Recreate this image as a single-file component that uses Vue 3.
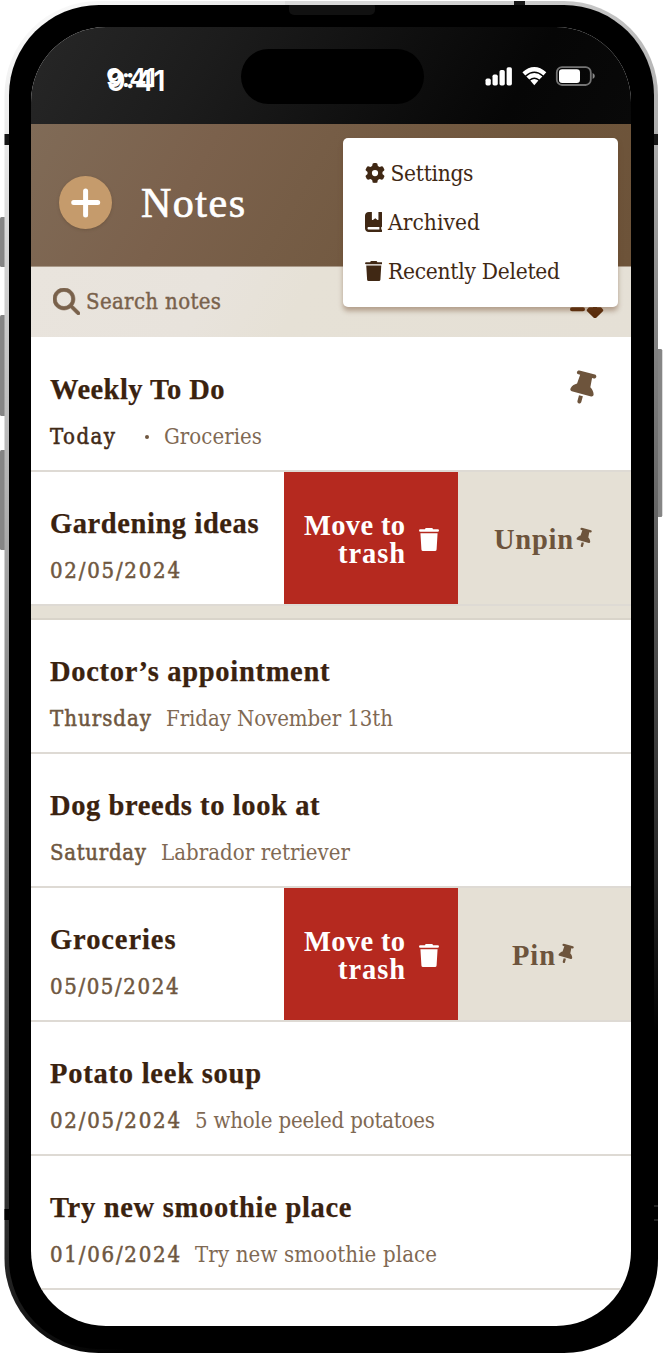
<script setup>
// Tracks a label out (or in) so that it spans the given number of pixels.
const vFit = {
  mounted(el, { value }) {
    if (!value) return
    const natural = el.getBoundingClientRect().width
    const step = (value - natural) / (el.textContent.length - 1)
    el.style.letterSpacing = `${step}px`
    el.style.marginRight = `${-step}px`
  },
}

const icons = {
  search: { box: '0 0 512 512', d: 'M416 208c0 45.9-14.9 88.3-40 122.7L502.6 457.4c12.5 12.5 12.5 32.8 0 45.3s-32.8 12.5-45.3 0L330.7 376c-34.4 25.2-76.8 40-122.7 40C93.1 416 0 322.9 0 208S93.1 0 208 0S416 93.1 416 208zM208 352a144 144 0 1 0 0-288 144 144 0 1 0 0 288z' },
  gear: { box: '0 0 512 512', d: 'M495.9 166.6c3.2 8.7 .5 18.4-6.4 24.6l-43.3 39.4c1.1 8.3 1.7 16.8 1.7 25.4s-.6 17.1-1.7 25.4l43.3 39.4c6.9 6.2 9.6 15.9 6.4 24.6c-4.4 11.9-9.7 23.3-15.8 34.3l-4.7 8.1c-6.6 11-14 21.4-22.1 31.2c-5.9 7.2-15.7 9.6-24.5 6.8l-55.7-17.7c-13.4 10.3-28.2 18.9-44 25.4l-12.5 57.1c-2 9.1-9 16.3-18.2 17.8c-13.8 2.3-28 3.5-42.5 3.5s-28.7-1.2-42.5-3.5c-9.2-1.5-16.2-8.7-18.2-17.8l-12.5-57.1c-15.8-6.5-30.6-15.1-44-25.4L83.1 425.9c-8.8 2.8-18.6 .3-24.5-6.8c-8.1-9.8-15.5-20.2-22.1-31.2l-4.7-8.1c-6.1-11-11.4-22.4-15.8-34.3c-3.2-8.7-.5-18.4 6.4-24.6l43.3-39.4C64.6 273.1 64 264.6 64 256s.6-17.1 1.7-25.4L22.4 191.2c-6.9-6.2-9.6-15.9-6.4-24.6c4.4-11.9 9.7-23.3 15.8-34.3l4.7-8.1c6.6-11 14-21.4 22.1-31.2c5.9-7.2 15.7-9.6 24.5-6.8l55.7 17.7c13.4-10.3 28.2-18.9 44-25.4l12.5-57.1c2-9.1 9-16.3 18.2-17.8C227.3 1.2 241.5 0 256 0s28.7 1.2 42.5 3.5c9.2 1.5 16.2 8.7 18.2 17.8l12.5 57.1c15.8 6.5 30.6 15.1 44 25.4l55.7-17.7c8.8-2.8 18.6-.3 24.5 6.8c8.1 9.8 15.5 20.2 22.1 31.2l4.7 8.1c6.1 11 11.4 22.4 15.8 34.3zM256 336a80 80 0 1 0 0-160 80 80 0 1 0 0 160z' },
  book: { box: '0 0 448 512', d: 'M0 96C0 43 43 0 96 0h80v190.7c0 13.4 15.5 20.9 26 12.5L264 160l54 43.2c10.5 8.4 26 .9 26-12.5V0h40 32c17.7 0 32 14.3 32 32v320c0 17.7-14.3 32-32 32v64c17.7 0 32 14.3 32 32s-14.3 32-32 32H96c-53 0-96-43-96-96V96zM64 416c0 17.7 14.3 32 32 32h272v-64H96c-17.7 0-32 14.3-32 32z' },
  trash: { box: '0 0 448 512', d: 'M28 30H132L144 8Q149 0 160 0H288Q299 0 304 8L316 30H420Q448 32 448 58Q446 84 420 86H28Q2 84 0 58Q2 32 28 30ZM32 116H416L394 478Q391 512 358 512H90Q57 512 54 478Z' },
  pin: { box: '0 0 384 512', d: 'M32 32C32 14.3 46.3 0 64 0H320c17.7 0 32 14.3 32 32s-14.3 32-32 32H290.5l11.4 148.2c36.7 19.9 65.7 53.2 79.5 94.7l1 3c3.3 9.8 1.6 20.5-4.4 28.8s-15.7 13.3-26 13.3H32c-10.3 0-19.9-4.9-26-13.3s-7.7-19.1-4.4-28.8l1-3c13.8-41.5 42.8-74.8 79.5-94.7L93.5 64H64C46.3 64 32 49.7 32 32zM160 384h64v96c0 17.7-14.3 32-32 32s-32-14.3-32-32V384z' },
}

const menu = [
  { icon: 'gear', label: 'Settings', width: 83 },
  { icon: 'book', label: 'Archived', width: 92 },
  { icon: 'trash', label: 'Recently Deleted', width: 172 },
]

const notes = [
  { title: 'Weekly To Do', tw: 174.5, date: 'Today', dw: 65, text: 'Groceries', sw: 98, pinned: true, dot: true },
  { title: 'Gardening ideas', tw: 208.5, date: '02/05/2024', dw: 130, action: 'Unpin', aw: 79, last: true },
  { title: 'Doctor’s appointment', tw: 279.5, date: 'Thursday', dw: 101, text: 'Friday November 13th', sw: 227 },
  { title: 'Dog breeds to look at', tw: 269.5, date: 'Saturday', dw: 96, text: 'Labrador retriever', sw: 189 },
  { title: 'Groceries', tw: 125.5, date: '05/05/2024', dw: 128.5, action: 'Pin', aw: 43 },
  { title: 'Potato leek soup', tw: 211, date: '02/05/2024', dw: 130, text: '5 whole peeled potatoes', sw: 240 },
  { title: 'Try new smoothie place', tw: 301.5, date: '01/06/2024', dw: 130, text: 'Try new smoothie place', sw: 242 },
]
</script>

<template>
  <div class="stage">
    <svg class="frame" width="663" height="1353" viewBox="0 0 663 1353">
      <defs>
        <linearGradient id="metal" gradientUnits="userSpaceOnUse" x1="0" y1="0" x2="662" y2="1103">
          <stop offset="0" stop-color="#fff" />
          <stop offset=".08" stop-color="#ededed" />
          <stop offset=".18" stop-color="#d2d2d2" />
          <stop offset=".34" stop-color="#b0b0b0" />
          <stop offset=".5" stop-color="#808080" />
          <stop offset=".68" stop-color="#505050" />
          <stop offset=".85" stop-color="#252525" />
          <stop offset=".95" stop-color="#000" />
        </linearGradient>
      </defs>
      <g fill="#858585">
        <rect x="0" y="217" width="6" height="50" rx="1.5" />
        <rect x="0" y="315" width="6" height="101" rx="1.5" />
        <rect x="0" y="450" width="6" height="100" rx="1.5" />
        <rect x="656" y="349" width="6.3" height="168" rx="1.5" />
      </g>
      <rect x="4.5" y="1" width="653.5" height="1352" rx="94" fill="url(#metal)" />
      <g fill="#151515">
        <rect x="4.5" y="134" width="6" height="11" />
        <rect x="652" y="134" width="6" height="11" />
        <rect x="514" y="1" width="11" height="6" />
        <rect x="4.5" y="1209" width="6" height="11" fill="#000" />
        <rect x="138" y="1347" width="11" height="6" fill="#000" />
      </g>
      <rect x="9" y="5" width="645" height="1344" rx="90" />
      <rect x="289" y="2" width="86" height="13" rx="5" fill="#111" />
      <rect x="285" y="1" width="94" height="4" fill="#d9d9d9" />
      <path d="M654 1206h4M654 1220h4" stroke="#222" stroke-width="2" />
    </svg>

    <main class="screen">
      <section class="status">
        <div class="clock">9:41</div>
        <div class="clock second">9:41</div>
        <div class="island"></div>
        <svg class="signals" width="112" height="22" viewBox="0 0 112 22">
          <g fill="#fff">
            <rect x=".5" y="12.5" width="5.3" height="7" rx="1.7" />
            <rect x="7.5" y="8.5" width="5.3" height="11" rx="1.7" />
            <rect x="14.5" y="4" width="5.3" height="15.5" rx="1.7" />
            <rect x="21.6" y="1.3" width="5.3" height="18.2" rx="1.7" />
            <path d="M37.4 6.2Q49.3-4.2 61.3 6.2L58.4 9.4Q49.3 1.6 40.3 9.4Z" />
            <path d="M41.3 10.4Q49.3 3.6 57.4 10.4L54.4 13.6Q49.3 9.3 44.3 13.6Z" />
            <path d="M45.3 14.6Q49.3 11.2 53.4 14.6L49.3 19.3Z" />
          </g>
          <rect x="71.8" y="1.2" width="34" height="17.8" rx="5.2" fill="none" stroke="#747474" stroke-width="1.8" />
          <rect x="74" y="3.3" width="21" height="13.7" rx="3.2" fill="#fff" />
          <path d="M107.6 7v6q2.2-.8 2.2-3t-2.2-3z" fill="#8a8a8a" />
        </svg>
      </section>

      <header class="header">
        <div class="add">
          <svg width="53" height="53" viewBox="0 0 53 53">
            <path d="M26.6 15v24M14.7 26.6h24" stroke="#fff" stroke-width="5" stroke-linecap="round" />
          </svg>
        </div>
        <h1 v-fit="104">Notes</h1>
      </header>

      <section class="search">
        <svg width="27" height="27" :viewBox="icons.search.box"><path :d="icons.search.d" fill="currentColor" stroke="currentColor" stroke-width="12" /></svg>
        <span v-fit="135">Search notes</span>
        <svg class="sort" width="36" height="32" viewBox="0 0 36 32">
          <g stroke="#5a2c0b" fill="none" stroke-width="4" stroke-linecap="round" stroke-linejoin="round">
            <path d="M3 23.3h11M26 5v22" /><path d="M19.6 24.3l6.4 6.2 6.4-6.2-1-1.2h-10.800z" fill="#5a2c0b" stroke-width="3.6" />
          </g>
        </svg>
      </section>

      <template v-for="n in notes" :key="n.title">
        <article class="note">
          <div class="body">
            <h2><span v-fit="n.tw">{{ n.title }}</span></h2>
            <p>
              <span v-fit="n.dw" class="date" :class="{ today: n.dot }">{{ n.date }}</span>
              <i v-if="n.dot" class="dot"></i>
              <span v-if="n.text" v-fit="n.sw" class="preview">{{ n.text }}</span>
            </p>
          </div>
          <svg v-if="n.pinned" class="pin" width="24" height="32" :viewBox="icons.pin.box"><path :d="icons.pin.d" /></svg>
          <template v-if="n.action">
            <div class="remove">
              <div><span v-fit="101">Move to</span><br /><span v-fit="67">trash</span></div>
              <svg width="20" height="23" :viewBox="icons.trash.box" preserveAspectRatio="none"><path :d="icons.trash.d" fill="#fff" /></svg>
            </div>
            <div class="toggle">
              <span v-fit="n.aw">{{ n.action }}</span>
              <svg width="14" height="19" :viewBox="icons.pin.box"><path :d="icons.pin.d" /></svg>
            </div>
          </template>
        </article>
        <div v-if="n.last" class="band"></div>
      </template>
    </main>

    <nav class="menu">
      <div v-for="m in menu" :key="m.label" class="item">
        <svg height="20" :width="m.icon === 'gear' ? 20 : 17.5" :viewBox="icons[m.icon].box"><path :d="icons[m.icon].d" fill="#402814" /></svg>
        <span v-fit="m.width">{{ m.label }}</span>
      </div>
    </nav>
  </div>
</template>

<style>
body { margin: 0; background: #fff; }
</style>

<style scoped>
.stage { position: relative; width: 663px; height: 1353px; overflow: hidden; box-sizing: border-box; padding: 27px 32px 27px 31px; font-family: "Liberation Serif", serif; }
.stage span, h1 { display: inline-block; white-space: nowrap; }
.frame { position: absolute; left: 0; top: 0; }
.screen { position: relative; width: 600px; height: 1299px; border-radius: 75px; overflow: hidden; background: #fff; }
.status { position: relative; height: 97px; background: linear-gradient(120deg, #272727, #1c1c1c 30%, #111 55%, #060606 80%, #090909); }
.clock { position: absolute; left: 75px; top: 37px; font: 600 26px/28px Inter, "Liberation Sans", sans-serif; letter-spacing: -.8px; color: #fff; }
.second { left: 76px; top: 40px; font-size: 29px; letter-spacing: 0; }
.island { position: absolute; left: 210px; top: 22px; width: 183px; height: 55px; border-radius: 28px; background: #000; }
.signals { position: absolute; left: 454px; top: 39px; }
.header { height: 143px; box-sizing: border-box; padding: 14px 0 0 28px; display: flex; align-items: center; gap: 29px; background: linear-gradient(120deg, #806b57, #7b614c 28%, #765d46 45%, #6e553b 78%, #6d5339); border-bottom: 1px solid #a99988; }
.add { width: 53px; height: 53px; border-radius: 50%; background: #c59b6c; box-shadow: 0 1px 3px #5b432c66; }
h1 { margin: 2px 0 0; font-size: 42px; line-height: 48px; font-weight: 400; color: #fff; -webkit-text-stroke: .7px #fff; }
.search { height: 70px; box-sizing: border-box; padding: 0 0 1px 22px; display: flex; align-items: center; gap: 6px; color: #79614b; font: 500 22px "DejaVu Serif Condensed", "DejaVu Serif", serif; background: linear-gradient(120deg, #e9e4dd, #e8e3dc 30%, #e6e1d6 45%, #e5e0d6); }
.search span { -webkit-text-stroke: .4px #79614b; }
.sort { margin-left: auto; margin-right: 26px; }
.note { height: 134px; box-sizing: border-box; border-bottom: 2px solid #dedad4; display: flex; }
.search + .note { height: 135px; }
.body { flex: 1; padding: 35px 0 0 19px; }
h2 { margin: 0; font-size: 28.5px; line-height: 34px; height: 34px; font-weight: 700; color: #3a220f; white-space: nowrap; -webkit-text-stroke: .25px #3a220f; }
.search + .note .body { padding-top: 36px; }
p { margin: 16px 0 0; height: 28px; line-height: 28px; font-size: 22px; display: flex; align-items: center; gap: 15px; color: #6f5740; font-family: "DejaVu Serif Condensed", "DejaVu Serif", serif; }
.date { -webkit-text-stroke: .5px #6f5740; }
.today { color: #422a17; -webkit-text-stroke-color: #422a17; }
.dot { width: 4px; height: 4px; margin-left: 15px; border-radius: 50%; background: #6f5740; }
.preview { color: #7f6953; }
.pin { margin: 35px 36px 0 0; transform: rotate(15deg); fill: #6d543c; overflow: visible; }
.remove { width: 174px; box-sizing: border-box; padding: 4px 19px 0 0; display: flex; align-items: center; justify-content: flex-end; gap: 14px; background: #b5291f; color: #fff; font-size: 28.5px; line-height: 28px; font-weight: 700; text-align: right; }
.remove svg { margin-top: -1px; }
.toggle { width: 173px; box-sizing: border-box; padding: 3px 4px 0 0; display: flex; align-items: center; justify-content: center; gap: 4px; background: #e5e0d5; color: #6d543c; font-size: 28.5px; font-weight: 700; }
.toggle svg { transform: translateY(-1.5px) rotate(15deg); fill: #6d543c; overflow: visible; }
.band { height: 14px; box-sizing: border-box; background: #e5e0d5; border-bottom: 2px solid #d9d4ca; }
.menu { position: absolute; left: 342.5px; top: 138px; width: 275px; height: 169px; box-sizing: border-box; padding: 10px 22px; border-radius: 5px; background: #fff; box-shadow: 0 4px 5px #6a3f2066; }
.item { height: 49px; display: flex; align-items: center; gap: 6px; font: 22.5px "DejaVu Serif Condensed", "DejaVu Serif", serif; color: #402814; }
</style>
